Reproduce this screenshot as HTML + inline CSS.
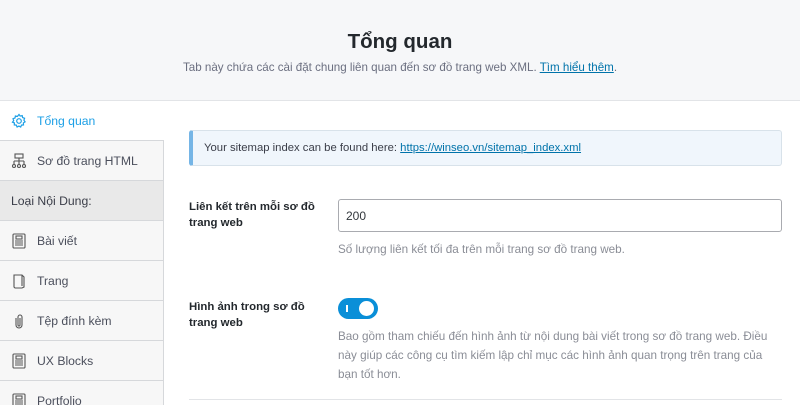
<!DOCTYPE html>
<html style="width:800px;height:405px;overflow:hidden"><head><meta charset="utf-8"><style>
*{box-sizing:border-box;margin:0;padding:0}
body{width:800px;height:405px;overflow:hidden;background:#fff;font-family:"Liberation Sans",sans-serif;color:#242748;position:relative}
.hdr{position:absolute;left:0;top:0;width:800px;height:101px;background:#f6f7f9;border-bottom:1px solid #e2e4e7;text-align:center}
.hdr h1{position:absolute;top:30px;width:100%;font-size:20.5px;font-weight:bold;color:#23282d}
.hdr p{position:absolute;top:61px;width:100%;font-size:11.6px;color:#6b6f80}
.hdr a{color:#0073aa;text-decoration:underline}
.side{position:absolute;left:0;top:102px;width:164px;height:303px;border-right:1px solid #d6d8db;background:#f7f7f7}
.it{height:40px;border-bottom:1px solid #d6d8db;display:flex;align-items:center;padding-left:11px;font-size:12.2px;color:#4b4f5c}
.it svg{margin-right:10px;flex:none}
.it.act{background:#fff;color:#1ea0e6;border-bottom:1px solid #d6d8db;margin-right:-1px;position:relative;height:39px}
.it.hd{background:#e9e9e9;color:#3a3d48}
.note{position:absolute;left:189px;top:130px;width:593px;height:36px;background:#f0f6fc;border:1px solid #d8e2ea;border-left:4px solid #75b5e6;border-radius:3px;font-size:11.3px;padding:11px 0 0 11px;color:#3a3d48}
.note a{color:#0073aa;text-decoration:underline}
.lbl{position:absolute;left:189px;font-size:11.4px;font-weight:bold;line-height:16px;color:#23282d}
.inp{position:absolute;left:338px;top:199px;width:444px;height:33px;border:1px solid #a9abb0;border-radius:3px;font-size:12px;padding:9px 0 0 7px;color:#32373c}
.desc{position:absolute;left:338px;width:450px;font-size:11.7px;color:#8a8d96;line-height:19px}
.tg{position:absolute;left:338px;top:298px;width:40px;height:21px;border-radius:11px;background:#0a8fd8}
.tg i{position:absolute;left:8px;top:7px;width:2px;height:7px;background:#fff}
.tg b{position:absolute;right:4px;top:3px;width:15px;height:15px;border-radius:50%;background:#fff}
.ln{position:absolute;left:189px;top:399px;width:593px;height:1px;background:#e2e4e7}
</style></head><body>
<div class="hdr"><h1>Tổng quan</h1><p>Tab này chứa các cài đặt chung liên quan đến sơ đồ trang web XML. <a>Tìm hiểu thêm</a>.</p></div>
<div class="side">
<div class="it act"><svg width="16" height="16" viewBox="0 0 16 16" fill="none" stroke="#1ea0e6" stroke-width="1.2"><circle cx="8" cy="8" r="2.3"/><path d="M8 1.5l1.2 1.6 2-.5.4 2 2 .7-.7 1.9 1.2 1.6-1.7 1.1.1 2-2 .2-.8 1.9-1.8-.9-1.8.9-.8-1.9-2-.2.1-2L1.5 9.2l1.2-1.6L2 5.7l2-.7.4-2 2 .5z"/></svg>Tổng quan</div>
<div class="it"><svg width="16" height="16" viewBox="0 0 16 16" fill="none" stroke="#555" stroke-width="1.1"><rect x="4" y="1" width="8" height="4"/><path d="M8 5v3M3 8h10M3 8v3M8 8v3M13 8v3"/><circle cx="3" cy="13" r="1.5"/><circle cx="8" cy="13" r="1.5"/><circle cx="13" cy="13" r="1.5"/></svg>Sơ đồ trang HTML</div>
<div class="it hd">Loại Nội Dung:</div>
<div class="it"><svg width="16" height="16" viewBox="0 0 14 16" fill="none" stroke="#555" stroke-width="1.1"><rect x="1" y="1" width="12" height="14" rx="1"/><rect x="4" y="3" width="6" height="3"/><path d="M3 8h8M3 10h8M3 12h8"/></svg>Bài viết</div>
<div class="it"><svg width="16" height="16" viewBox="0 0 14 16" fill="none" stroke="#555" stroke-width="1.1"><path d="M2 2h8l2 2v10l-2 1H3l-1-1z M10 2v11"/></svg>Trang</div>
<div class="it"><svg width="16" height="16" viewBox="0 0 14 16" fill="none" stroke="#555" stroke-width="1.1"><path d="M4 5v7a3 3 0 0 0 6 0V4a2 2 0 0 0-4 0v8a1 1 0 0 0 2 0V5"/></svg>Tệp đính kèm</div>
<div class="it"><svg width="16" height="16" viewBox="0 0 14 16" fill="none" stroke="#555" stroke-width="1.1"><rect x="1" y="1" width="12" height="14" rx="1"/><rect x="4" y="3" width="6" height="3"/><path d="M3 8h8M3 10h8M3 12h8"/></svg>UX Blocks</div>
<div class="it"><svg width="16" height="16" viewBox="0 0 14 16" fill="none" stroke="#555" stroke-width="1.1"><rect x="1" y="1" width="12" height="14" rx="1"/><rect x="4" y="3" width="6" height="3"/><path d="M3 8h8M3 10h8M3 12h8"/></svg>Portfolio</div>
</div>
<div class="note">Your sitemap index can be found here: <a>https://winseo.vn/sitemap_index.xml</a></div>
<div class="lbl" style="top:199px">Liên kết trên mỗi sơ đồ<br>trang web</div>
<div class="inp">200</div>
<div class="desc" style="top:240px">Số lượng liên kết tối đa trên mỗi trang sơ đồ trang web.</div>
<div class="lbl" style="top:299px">Hình ảnh trong sơ đồ<br>trang web</div>
<div class="tg"><i></i><b></b></div>
<div class="desc" style="top:327px">Bao gồm tham chiếu đến hình ảnh từ nội dung bài viết trong sơ đồ trang web. Điều<br>này giúp các công cụ tìm kiếm lập chỉ mục các hình ảnh quan trọng trên trang của<br>bạn tốt hơn.</div>
<div class="ln"></div>
</body></html>
